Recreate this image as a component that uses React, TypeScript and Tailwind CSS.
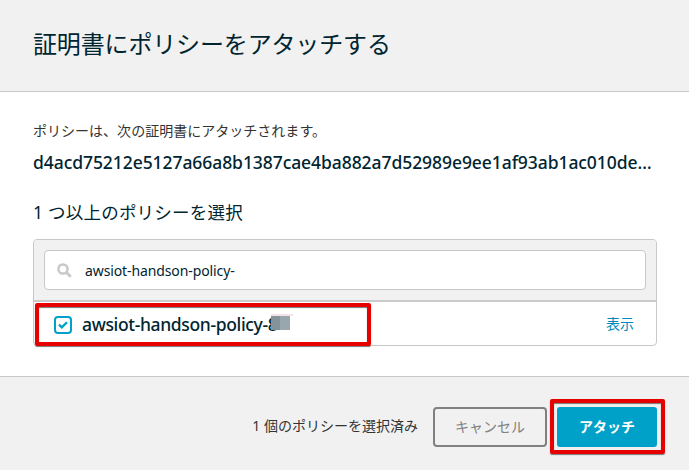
import React from "react";

const LATIN = "font-['Noto_Sans','Noto_Sans_CJK_JP',sans-serif]";

function Header() {
  return (
    <header className="flex h-[92px] shrink-0 items-center border-b border-[#c8c8c8] bg-[#f1f1f1] pl-[33px]">
      <h1 className="relative -top-[2px] whitespace-nowrap text-[24px] leading-8 tracking-[-0.15px]">証明書にポリシーをアタッチする</h1>
    </header>
  );
}

function SearchBox() {
  return (
    <div className="flex h-[62px] flex-col rounded-t-[3px] border-b-2 border-[#cbcbcb] bg-[#f1f1f1] px-[10px] pt-[10px]">
      <div className="flex h-10 items-center rounded-[4px] border border-[#c8c8c8] bg-white pl-3">
        <svg width="15" height="15" viewBox="0 0 15 15" fill="none" stroke="#c8c8c8">
          <circle cx="6" cy="6" r="4.6" strokeWidth="2.5" />
          <path d="M9.5 9.5 13 13" strokeWidth="2.8" strokeLinecap="round" />
        </svg>
        <span className="relative top-px ml-[13px] whitespace-nowrap text-[14px] leading-5 tracking-[-0.11px]">awsiot-handson-policy-</span>
      </div>
    </div>
  );
}

function PolicyRow() {
  return (
    <div className="relative flex h-[43px] items-center pl-5 pr-[22px] pt-[3px]">
      <span className="flex h-[18px] w-[18px] items-center justify-center rounded-[4px] border-2 border-[#00a1c9]">
        <svg width="10" height="8" viewBox="0 0 10 8" fill="none" stroke="#00a1c9" strokeWidth="2.3">
          <path d="M1 3.7 3.8 6.3 9 1.2" />
        </svg>
      </span>
      <span className="relative -top-px ml-[10px] whitespace-nowrap text-[17.5px] font-medium leading-6 tracking-[-0.35px]">
        awsiot-handson-policy-8
        <span className="absolute left-[189px] top-[2px] h-[2px] w-[22px] bg-[#f3e3e6]" />
        <span className="absolute left-[189px] top-[4px] flex h-[14px] w-[19px]">
          <span className="w-[9px] bg-[#84939a]" />
          <span className="w-[10px] bg-[#98a6ad]" />
        </span>
      </span>
      <a className="relative -top-px ml-auto text-[14px] leading-5 text-[#0088bb]">表示</a>
      <span className="absolute left-[1px] top-[1px] h-[43px] w-[336px] rounded-[2px] border-4 border-[#e60000] shadow-[0_1px_1px_#777,inset_0_1px_1px_#777]" />
    </div>
  );
}

function Footer() {
  return (
    <footer className="flex h-[94px] shrink-0 items-start justify-end border-t border-[#c8c8c8] bg-[#f1f1f1] pr-8 pt-[30px]">
      <span className="mr-[15px] mt-[9px] whitespace-nowrap text-[14px] leading-5 text-[#333]">1 個のポリシーを選択済み</span>
      <button className="mr-[10px] h-10 w-[114px] rounded-[4px] border-2 border-[#808080] text-[14px] leading-5 text-[#808080]">キャンセル</button>
      <div className="relative">
        <button className="block h-10 w-[100px] rounded-[3px] bg-[#00a1c9] text-[14px] font-bold leading-5 text-white">アタッチ</button>
        <span className="absolute -left-[7px] -top-[8px] h-[55px] w-[115px] rounded-[2px] border-4 border-[#e60000] shadow-[0_1px_1px_#777,inset_0_1px_1px_#777]" />
      </div>
    </footer>
  );
}

export default function App() {
  return (
    <div className={`flex h-[470px] w-[689px] flex-col overflow-hidden bg-white text-[#002530] ${LATIN}`}>
      <Header />
      <main className="flex-1 px-[33px] pt-[29px]">
        <p className="whitespace-nowrap text-[14px] leading-5 tracking-[0.02px] text-[#333]">ポリシーは、次の証明書にアタッチされます。</p>
        <p className="mt-[9px] whitespace-nowrap text-[17.5px] font-medium leading-6 tracking-[-0.07px]">
          d4acd75212e5127a66a8b1387cae4ba882a7d52989e9ee1af93ab1ac010de…
        </p>
        <h2 className="mt-[26px] whitespace-nowrap text-[17.5px] leading-6 tracking-[0.22px]">1 つ以上のポリシーを選択</h2>
        <section className="mt-[15px] w-[624px] rounded-[4px] border border-[#c8c8c8]">
          <SearchBox />
          <PolicyRow />
        </section>
      </main>
      <Footer />
    </div>
  );
}
